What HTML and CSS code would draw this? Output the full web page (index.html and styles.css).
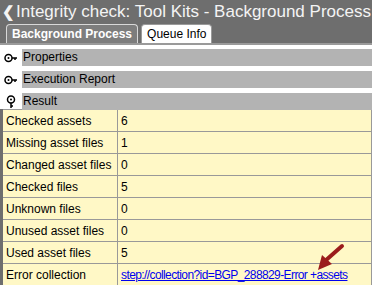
FILE: index.html
```html
<!doctype html>
<html lang="en">
  <head>
    <meta charset="UTF-8" />
    <title>Integrity check</title>
    <link rel="stylesheet" href="styles.css">
  </head>
  <body>
    <header class="title-bar">
      <span class="back">&#10094;</span>Integrity check: Tool Kits - Background Process
    </header>

    <nav class="tabs">
      <span class="tab active">Background Process</span>
      <span class="tab">Queue Info</span>
    </nav>

    <main class="content">
      <div class="section">
        <span class="sec-icon">
          <svg width="14" height="10" viewBox="0 0 14 10"><circle cx="4.5" cy="5" r="3.5" fill="#fff" stroke="#000" stroke-width="1.5"/><circle cx="4.5" cy="5" r="1" fill="#000"/><path d="M8 5h5M11 5v2" stroke="#000" stroke-width="1.5"/></svg>
        </span>
        <div class="sec-bar">Properties</div>
      </div>
      <div class="section">
        <span class="sec-icon">
          <svg width="14" height="10" viewBox="0 0 14 10"><circle cx="4.5" cy="5" r="3.5" fill="#fff" stroke="#000" stroke-width="1.5"/><circle cx="4.5" cy="5" r="1" fill="#000"/><path d="M8 5h5M11 5v2" stroke="#000" stroke-width="1.5"/></svg>
        </span>
        <div class="sec-bar">Execution Report</div>
      </div>
      <div class="section last">
        <span class="sec-icon">
          <svg width="10" height="14" viewBox="0 0 10 14"><circle cx="5" cy="4.5" r="3.5" fill="#fff" stroke="#000" stroke-width="1.5"/><circle cx="5" cy="4.5" r="1" fill="#000"/><path d="M5 8v5M5 11h2" stroke="#000" stroke-width="1.5"/></svg>
        </span>
        <div class="sec-bar">Result</div>
      </div>

      <table class="result">
        <tr><td class="key">Checked assets</td><td>6</td></tr>
        <tr><td class="key">Missing asset files</td><td>1</td></tr>
        <tr><td class="key">Changed asset files</td><td>0</td></tr>
        <tr><td class="key">Checked files</td><td>5</td></tr>
        <tr><td class="key">Unknown files</td><td>0</td></tr>
        <tr><td class="key">Unused asset files</td><td>0</td></tr>
        <tr><td class="key">Used asset files</td><td>5</td></tr>
        <tr>
          <td class="key">Error collection</td>
          <td class="link-cell">
            <a href="#">step://collection?id=BGP_288829-Error +assets</a>
            <svg class="arrow" width="30" height="30" viewBox="0 0 30 30"><path d="M27 3L10 18" stroke="#9b1c1c" stroke-width="4" stroke-linecap="round"/><path d="M3 27L7 12L17 21Z" fill="#9b1c1c"/></svg>
          </td>
        </tr>
      </table>
    </main>
  </body>
</html>
```

FILE: styles.css
```css
/* Reset */
* {
  margin: 0;
  padding: 0;
  box-sizing: border-box;
}

body {
  background-color: white;
  font-family: "Liberation Sans", Arial, sans-serif;
  font-size: 12px;
  overflow: hidden;
}

/* Title bar */
.title-bar {
  background-color: #6e6e6e;
  color: #f4f4f4;
  font-size: 17px;
  height: 24px;
  line-height: 24px;
  padding-left: 2px;
  white-space: nowrap;
}

.back {
  font-size: 15px;
  font-weight: bold;
  margin-right: 1px;
}

/* Tabs */
.tabs {
  background-color: #6e6e6e;
  display: flex;
  align-items: flex-end;
  gap: 3px;
  height: 21px;
  padding-left: 6px;
  border-bottom: 2px solid #9a9a9a;
}

.tab {
  background-color: white;
  color: black;
  height: 19px;
  line-height: 18px;
  padding: 0 5px;
  border: 1px solid #9a9a9a;
  border-bottom: none;
  border-radius: 4px 4px 0 0;
}

.tab.active {
  background-color: #7d7d7d;
  color: white;
  font-weight: bold;
  padding: 0 5px;
  border-color: #d8d8d8;
}

/* Collapsible sections */
.content {
  padding-top: 4px;
}

.section {
  display: flex;
  align-items: center;
  margin-bottom: 5px;
}

.section.last {
  margin-bottom: 0;
}

.sec-icon {
  width: 22px;
  display: flex;
  justify-content: center;
}

.sec-bar {
  flex: 1;
  background-color: #b3b3b3;
  height: 17px;
  line-height: 17px;
  padding-left: 1px;
}

/* Result table */
.result {
  border-collapse: collapse;
  width: 100%;
  border-left: 3px solid #6e6e6e;
  background-color: #fff8c6;
  margin-top: -1px;
}

.result td {
  border: 1px solid #999;
  height: 22px;
  padding: 0 3px;
}

.result td.key {
  width: 116px;
}

.link-cell {
  position: relative;
  white-space: nowrap;
}

.link-cell a {
  color: #0000ee;
  letter-spacing: -0.6px;
}

.arrow {
  position: absolute;
  right: 26px;
  bottom: 12px;
}
```
